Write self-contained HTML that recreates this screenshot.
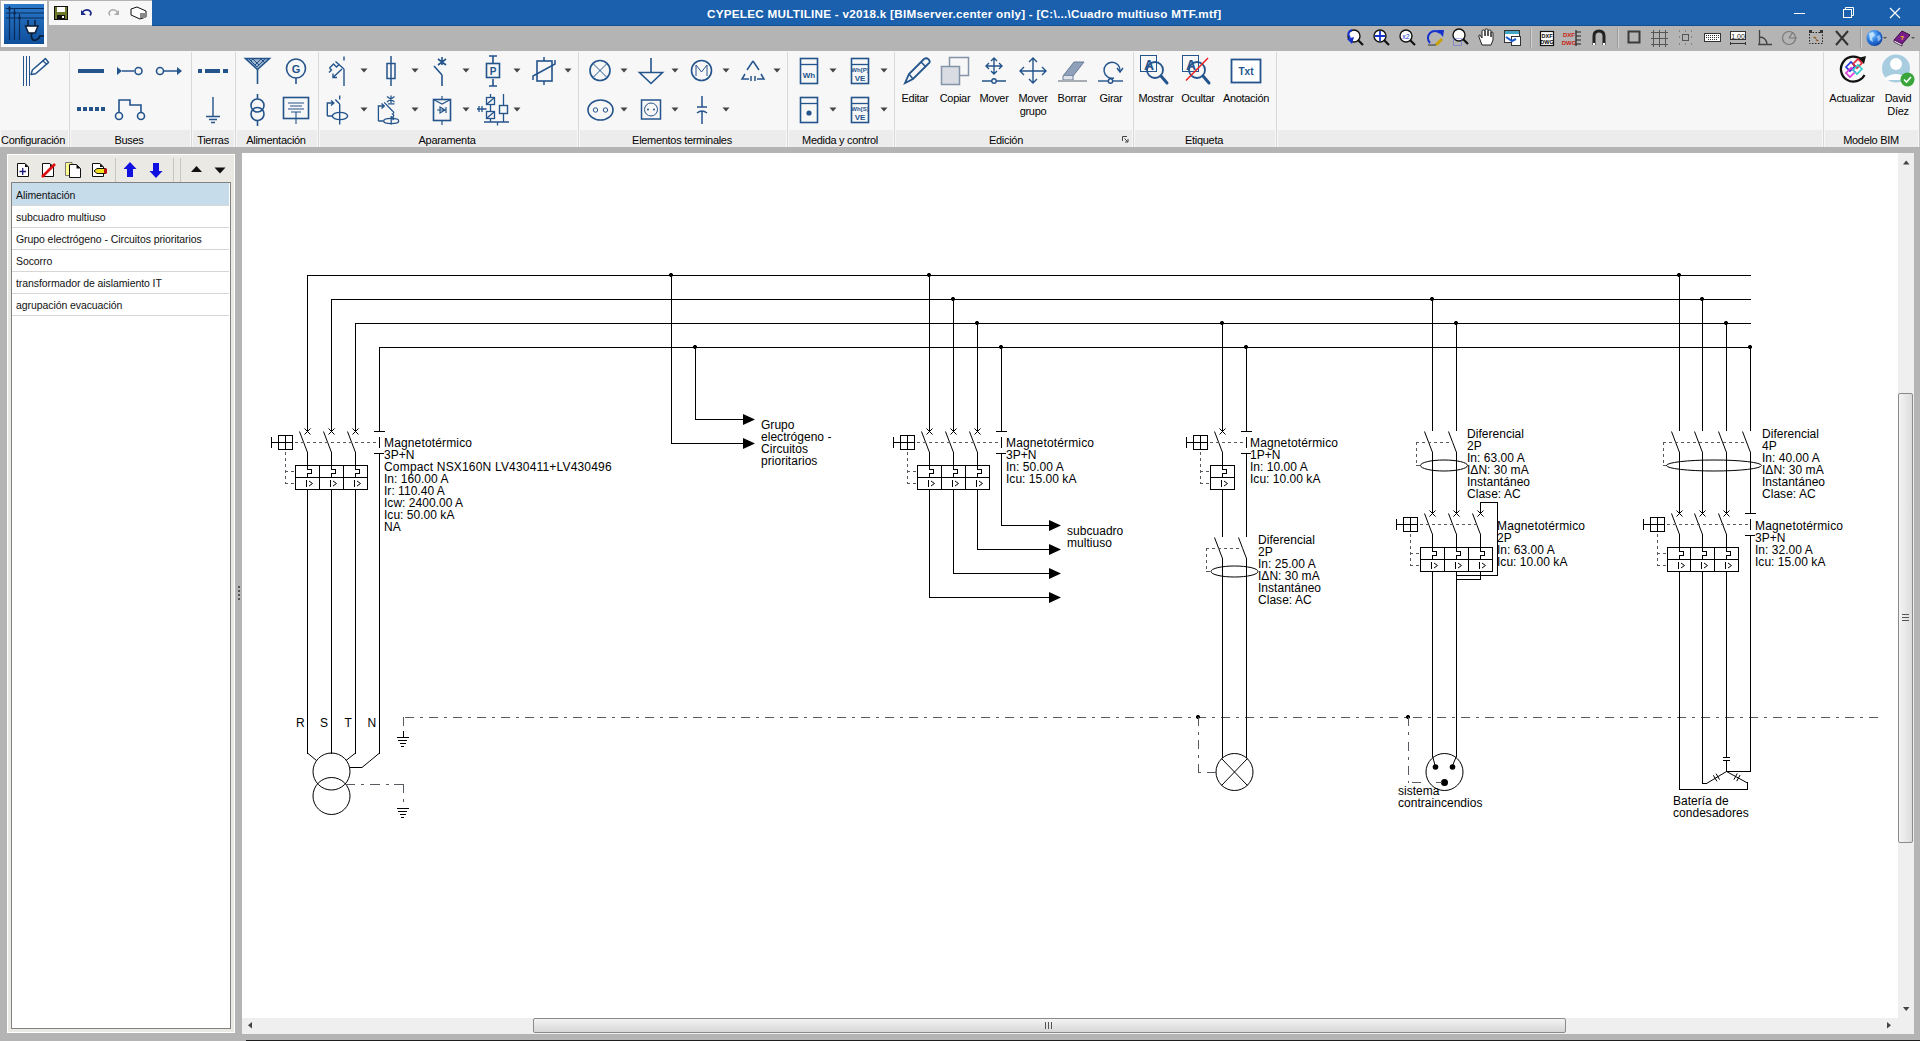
<!DOCTYPE html>
<html><head><meta charset="utf-8">
<style>
*{margin:0;padding:0;box-sizing:border-box}
html,body{width:1920px;height:1041px;overflow:hidden;background:#b4b4b4;font-family:"Liberation Sans",sans-serif;position:relative}
.a{position:absolute}
svg{position:absolute;left:0;top:0}
svg text{font-family:"Liberation Sans",sans-serif}
#title{left:152px;top:0;width:1768px;height:26px;background:#1b60ad}
#ttl{left:707px;top:7px;font-size:11.7px;font-weight:bold;color:#fff;white-space:nowrap;letter-spacing:0.26px}
#ribbon{left:0;top:51px;width:1920px;height:96px;background:#f7f7f7}
#left{left:7px;top:154px;width:228px;height:879px;background:#ebe9e4;border-left:1px solid #fff;border-top:1px solid #fff;border-right:1px solid #fff;border-bottom:1px solid #fff}
#list{left:11px;top:182px;width:220px;height:847px;background:#fff;border:1px solid #828282}
#canvas{left:242px;top:153px;width:1656px;height:865px;background:#fff}
#vscroll{left:1898px;top:153px;width:16px;height:881px;background:#efefef}
#hscroll{left:242px;top:1018px;width:1656px;height:16px;background:#efefef}
#bottomline{left:246px;top:1040px;width:1674px;height:1px;background:#1e1e1e}
#vthumb{left:1898px;top:393px;width:15px;height:450px;border:1px solid #8a8a8a;border-radius:2px;background:linear-gradient(90deg,#f4f4f4,#dcdcdc)}
#hthumb{left:533px;top:1018px;width:1033px;height:15px;border:1px solid #8a8a8a;border-radius:2px;background:linear-gradient(180deg,#f4f4f4,#d6d6d6)}
</style></head>
<body>
<div class="a" id="title"></div>
<div class="a" id="ttl">CYPELEC MULTILINE - v2018.k [BIMserver.center only] - [C:\...\Cuadro multiuso MTF.mtf]</div>
<div class="a" id="ribbon"></div>
<div class="a" id="left"></div>
<div class="a" id="list"></div>
<div class="a" id="canvas"></div>
<div class="a" id="vscroll"></div>
<div class="a" id="hscroll"></div>
<div class="a" id="vthumb"></div>
<div class="a" id="hthumb"></div>
<div class="a" id="bottomline"></div>
<svg width="1920" height="1041" viewBox="0 0 1920 1041">
<rect x="1" y="1" width="46" height="46" fill="#fbfbfb"/>
<defs><linearGradient id="ag" x1="0" y1="0" x2="0" y2="1"><stop offset="0" stop-color="#2a78c8"/><stop offset="1" stop-color="#0f4f9c"/></linearGradient></defs>
<rect x="4" y="4" width="40" height="40" fill="url(#ag)"/>
<path d="M6,8.5H44M6,13H44M6,18H44M9.5,6V40M14.5,9V40M19.5,14V40" stroke="#0a2c5a" stroke-width="1.2"/><circle cx="9.5" cy="8.5" r="1.5" fill="#0a2c5a"/><circle cx="14.5" cy="13" r="1.5" fill="#0a2c5a"/><circle cx="19.5" cy="18" r="1.5" fill="#0a2c5a"/>
<path d="M28,20V26M35,20V26M25.5,26H38L35,33H28.5Z" fill="#fff" stroke="#0a1a30" stroke-width="1.4"/><path d="M31.5,33V37Q32,41 36,40Q39,39 40,36H44" fill="none" stroke="#0a1a30" stroke-width="1.6"/>
<rect x="49" y="1" width="103" height="24" fill="#f7f7f7"/>
<rect x="54.5" y="6.5" width="13" height="13" fill="#6d7a2e" stroke="#111" stroke-width="1"/><rect x="57" y="7" width="8" height="5" fill="#fff"/><rect x="57" y="15" width="8" height="4" fill="#111"/><rect x="62" y="16" width="2" height="2" fill="#fff"/>
<path d="M82,12.5Q86,8 90,11Q92,13 90,15.5" fill="none" stroke="#1a2a8a" stroke-width="1.6"/><path d="M81,10V15H86Z" fill="#1a2a8a"/>
<path d="M118,12.5Q114,8 110,11Q108,13 110,15.5" fill="none" stroke="#aaa" stroke-width="1.4"/><path d="M119,10V15H114Z" fill="#aaa"/>
<path d="M131,9L137,7L146,11L146,17L140,19L131,15Z" fill="#fff" stroke="#111" stroke-width="1"/><rect x="140" y="13" width="6" height="5" fill="#888"/>
<path d="M1794,13.5H1805" stroke="#fff" stroke-width="1"/>
<rect x="1843.5" y="9.5" width="8" height="8" fill="none" stroke="#fff"/><path d="M1845.5,9.5V7.5H1853.5V15.5H1851.5" fill="none" stroke="#fff"/>
<path d="M1890,8L1900,18M1900,8L1890,18" stroke="#fff" stroke-width="1.2"/>
<rect x="1530" y="28" width="1" height="20" fill="#9a9a9a"/><rect x="1531" y="28" width="1" height="20" fill="#d0d0d0"/>
<rect x="1617" y="28" width="1" height="20" fill="#9a9a9a"/><rect x="1618" y="28" width="1" height="20" fill="#d0d0d0"/>
<rect x="1860" y="28" width="1" height="20" fill="#9a9a9a"/><rect x="1861" y="28" width="1" height="20" fill="#d0d0d0"/>
<circle cx="1354" cy="36" r="6" fill="#fff" stroke="#111" stroke-width="1.4"/><path d="M1358,40L1363,45" stroke="#111" stroke-width="2.2"/><path d="M1350,38Q1346,32 1352,30" fill="none" stroke="#1533cc" stroke-width="2"/><path d="M1347,39L1352,44L1354,37Z" fill="#1533cc"/>
<circle cx="1380" cy="36" r="6" fill="#fff" stroke="#111" stroke-width="1.4"/><path d="M1384,40L1389,45" stroke="#111" stroke-width="2.2"/><path d="M1380,31V41M1375,36H1385" stroke="#1533cc" stroke-width="1.8"/>
<circle cx="1406" cy="36" r="6" fill="#fff" stroke="#111" stroke-width="1.4"/><path d="M1410,40L1415,45" stroke="#111" stroke-width="2.2"/><text x="1406" y="39" font-size="7" text-anchor="middle" fill="#1533cc">x2</text>
<path d="M1430,43A7,7 0 1 1 1440,33" fill="none" stroke="#1533cc" stroke-width="2"/><path d="M1437,30L1444,30L1443,37Z" fill="#1533cc"/><path d="M1436,45L1442,39" stroke="#c8a000" stroke-width="3"/><path d="M1428,45H1436" stroke="#333" stroke-width="1"/>
<circle cx="1459" cy="35" r="6" fill="#fff" stroke="#111" stroke-width="1.4"/><path d="M1463,39L1468,44" stroke="#111" stroke-width="2.2"/><rect x="1453.5" y="38.5" width="8" height="7" fill="none" stroke="#5566dd" stroke-dasharray="1,1"/>
<path d="M1482,45L1479,37Q1478,35 1480,35L1482,38V31Q1482,30 1483.5,30Q1485,30 1485,31V36V30Q1485,29 1486.5,29Q1488,29 1488,30V36V31Q1488,30 1489.5,30Q1491,30 1491,31V37V33Q1491,32 1492,32Q1493,32 1493,33V40L1491,45Z" fill="#fff" stroke="#222" stroke-width="1"/>
<rect x="1504.5" y="30.5" width="15" height="12" fill="#fff" stroke="#333"/><rect x="1505" y="31" width="14" height="3" fill="#43a6c6"/><rect x="1511.5" y="36.5" width="9" height="9" fill="#fff" stroke="#333"/><path d="M1506,37L1512,41L1516,39" fill="none" stroke="#1a5ad0" stroke-width="2"/>
<rect x="1540.5" y="31.5" width="13" height="14" fill="#fff" stroke="#111" stroke-width="1.2"/><text x="1547" y="38" font-size="5.5" font-weight="bold" text-anchor="middle">DXF</text><text x="1547" y="44" font-size="5.5" font-weight="bold" text-anchor="middle">DWG</text>
<text x="1569" y="37" font-size="6" font-weight="bold" text-anchor="middle" fill="#c21">DXF</text><text x="1569" y="45" font-size="6" font-weight="bold" text-anchor="middle" fill="#c21">DWG</text><path d="M1576,30V46M1576,32H1581M1576,36H1581M1576,40H1581M1576,44H1581" stroke="#222" stroke-width="1.2"/>
<path d="M1594,45V36Q1594,31 1599,31Q1604,31 1604,36V45" fill="none" stroke="#222" stroke-width="3"/><rect x="1593" y="43" width="2" height="2" fill="#fff"/><rect x="1603" y="43" width="2" height="2" fill="#fff"/>
<rect x="1628.5" y="31.5" width="11" height="11" fill="none" stroke="#3a3a3a" stroke-width="2"/>
<path d="M1653.5,30V47M1659.5,30V47M1665.5,30V47M1651,32.5H1668M1651,38.5H1668M1651,44.5H1668" stroke="#555" stroke-width="1"/>
<rect x="1682.5" y="34.5" width="6" height="6" fill="none" stroke="#555"/><path d="M1679,31H1680M1685,31H1686M1691,31H1692M1679,44H1680M1685,44H1686M1691,44H1692M1679,37H1680M1691,37H1692" stroke="#555"/>
<rect x="1704.5" y="33.5" width="16" height="8" fill="#fff" stroke="#333" stroke-width="1"/><path d="M1706,35.5H1719M1706,37.5H1719M1708,39.5H1717" stroke="#333" stroke-width="1" stroke-dasharray="1,1"/>
<rect x="1730.5" y="31.5" width="15" height="8" fill="#fff" stroke="#333"/><text x="1738" y="38.5" font-size="7" text-anchor="middle" fill="#222">1.00</text><path d="M1730,43.5H1746M1730.5,42V45M1745.5,42V45" stroke="#333"/>
<path d="M1758,44.5H1772M1759.5,30V44.5M1759.5,37Q1766,37 1767,44" fill="none" stroke="#444" stroke-width="1.3"/>
<circle cx="1789" cy="38" r="6.5" fill="none" stroke="#777" stroke-width="1.2"/><path d="M1789,38H1797M1789,38L1793,32" stroke="#777" stroke-width="1.2"/>
<rect x="1809.5" y="32.5" width="13" height="11" fill="none" stroke="#222" stroke-dasharray="1.5,1.5"/><rect x="1809" y="30" width="3" height="3" fill="#333"/><rect x="1820" y="30" width="3" height="3" fill="#333"/><path d="M1813,37H1816V41H1819" stroke="#c96" stroke-width="1"/>
<path d="M1836,31L1848,45M1848,31L1836,45" stroke="#333" stroke-width="2"/>
<defs><radialGradient id="gl" cx="0.35" cy="0.3" r="0.8"><stop offset="0" stop-color="#8fd0ff"/><stop offset="0.5" stop-color="#2a7be0"/><stop offset="1" stop-color="#0b3a9a"/></radialGradient></defs><circle cx="1874.5" cy="38" r="8" fill="url(#gl)"/><path d="M1869,33L1873,32L1875,35L1872,38L1873,42L1870,40Z" fill="#cfeaff" opacity="0.8"/><path d="M1877,36L1880,35L1881,39L1878,42Z" fill="#cfeaff" opacity="0.6"/><path d="M1883,37H1887L1885,39Z" fill="#555"/>
<path d="M1894,40L1902,31L1910,35L1902,44Z" fill="#7a1f8a" stroke="#3a0a44" stroke-width="1"/><path d="M1894,40L1902,44V46L1894,42Z" fill="#fff" stroke="#3a0a44" stroke-width=".8"/><text x="1902" y="40" font-size="6" font-weight="bold" text-anchor="middle" fill="#ffdd00">?</text><path d="M1911,37H1915L1913,39Z" fill="#555"/>
<rect x="1" y="130" width="67" height="17" fill="#ececec"/>
<rect x="71" y="130" width="119" height="17" fill="#ececec"/>
<rect x="193" y="130" width="41" height="17" fill="#ececec"/>
<rect x="237" y="130" width="80" height="17" fill="#ececec"/>
<rect x="320" y="130" width="257" height="17" fill="#ececec"/>
<rect x="580" y="130" width="206" height="17" fill="#ececec"/>
<rect x="789" y="130" width="104" height="17" fill="#ececec"/>
<rect x="896" y="130" width="236" height="17" fill="#ececec"/>
<rect x="1135" y="130" width="140" height="17" fill="#ececec"/>
<rect x="1278" y="130" width="544" height="17" fill="#ececec"/>
<rect x="1825" y="130" width="93" height="17" fill="#ececec"/>
<rect x="69" y="52" width="1" height="95" fill="#d8d8d8"/>
<rect x="191" y="52" width="1" height="95" fill="#d8d8d8"/>
<rect x="235" y="52" width="1" height="95" fill="#d8d8d8"/>
<rect x="318" y="52" width="1" height="95" fill="#d8d8d8"/>
<rect x="578" y="52" width="1" height="95" fill="#d8d8d8"/>
<rect x="787" y="52" width="1" height="95" fill="#d8d8d8"/>
<rect x="894" y="52" width="1" height="95" fill="#d8d8d8"/>
<rect x="1133" y="52" width="1" height="95" fill="#d8d8d8"/>
<rect x="1276" y="52" width="1" height="95" fill="#d8d8d8"/>
<rect x="1823" y="52" width="1" height="95" fill="#d8d8d8"/>
<rect x="1919" y="51" width="1" height="96" fill="#c8c8c8"/>
<text x="33" y="143.5" font-size="11" letter-spacing="-0.3" text-anchor="middle" fill="#050505">Configuración</text>
<text x="129" y="143.5" font-size="11" letter-spacing="-0.3" text-anchor="middle" fill="#050505">Buses</text>
<text x="213" y="143.5" font-size="11" letter-spacing="-0.3" text-anchor="middle" fill="#050505">Tierras</text>
<text x="276" y="143.5" font-size="11" letter-spacing="-0.3" text-anchor="middle" fill="#050505">Alimentación</text>
<text x="447" y="143.5" font-size="11" letter-spacing="-0.3" text-anchor="middle" fill="#050505">Aparamenta</text>
<text x="682" y="143.5" font-size="11" letter-spacing="-0.3" text-anchor="middle" fill="#050505">Elementos terminales</text>
<text x="840" y="143.5" font-size="11" letter-spacing="-0.3" text-anchor="middle" fill="#050505">Medida y control</text>
<text x="1006" y="143.5" font-size="11" letter-spacing="-0.3" text-anchor="middle" fill="#050505">Edición</text>
<text x="1204" y="143.5" font-size="11" letter-spacing="-0.3" text-anchor="middle" fill="#050505">Etiqueta</text>
<text x="1871" y="143.5" font-size="11" letter-spacing="-0.3" text-anchor="middle" fill="#050505">Modelo BIM</text>
<text x="915" y="101.5" font-size="11" letter-spacing="-0.3" text-anchor="middle" fill="#050505">Editar</text>
<text x="955" y="101.5" font-size="11" letter-spacing="-0.3" text-anchor="middle" fill="#050505">Copiar</text>
<text x="994" y="101.5" font-size="11" letter-spacing="-0.3" text-anchor="middle" fill="#050505">Mover</text>
<text x="1033" y="101.5" font-size="11" letter-spacing="-0.3" text-anchor="middle" fill="#050505">Mover</text>
<text x="1033" y="114.5" font-size="11" letter-spacing="-0.3" text-anchor="middle" fill="#050505">grupo</text>
<text x="1072" y="101.5" font-size="11" letter-spacing="-0.3" text-anchor="middle" fill="#050505">Borrar</text>
<text x="1111" y="101.5" font-size="11" letter-spacing="-0.3" text-anchor="middle" fill="#050505">Girar</text>
<text x="1156" y="101.5" font-size="11" letter-spacing="-0.3" text-anchor="middle" fill="#050505">Mostrar</text>
<text x="1198" y="101.5" font-size="11" letter-spacing="-0.3" text-anchor="middle" fill="#050505">Ocultar</text>
<text x="1246" y="101.5" font-size="11" letter-spacing="-0.3" text-anchor="middle" fill="#050505">Anotación</text>
<text x="1852" y="101.5" font-size="11" letter-spacing="-0.3" text-anchor="middle" fill="#050505">Actualizar</text>
<text x="1898" y="101.5" font-size="11" letter-spacing="-0.3" text-anchor="middle" fill="#050505">David</text>
<text x="1898" y="114.5" font-size="11" letter-spacing="-0.3" text-anchor="middle" fill="#050505">Díez</text>
<path d="M23.5,56V86M26.5,56V86M29.5,56V86" stroke="#24548c" stroke-width="1"/>
<path d="M31,74.5L35.6,73.8L48.6,62.4L45.4,58.6L32.4,70Z" fill="#fff" stroke="#24548c" stroke-width="1.5" stroke-linejoin="round"/><path d="M43,61L47,64.5" stroke="#24548c" stroke-width="1.2"/>
<rect x="78" y="69" width="26" height="4" fill="#24548c"/>
<path d="M117,67V75L122,71Z" fill="#24548c"/><path d="M122,71H134" stroke="#24548c" stroke-width="1.5"/><circle cx="138.5" cy="71" r="3.5" fill="none" stroke="#24548c" stroke-width="1.6"/>
<circle cx="160" cy="71" r="3.5" fill="none" stroke="#24548c" stroke-width="1.6"/><path d="M163.5,71H177" stroke="#24548c" stroke-width="1.5"/><path d="M177,67V75L182,71Z" fill="#24548c"/>
<rect x="77" y="107" width="4" height="4" fill="#24548c"/>
<rect x="83" y="107" width="4" height="4" fill="#24548c"/>
<rect x="89" y="107" width="4" height="4" fill="#24548c"/>
<rect x="95" y="107" width="4" height="4" fill="#24548c"/>
<rect x="101" y="107" width="4" height="4" fill="#24548c"/>
<path d="M119,112.5V100H130V105H141V112.5" fill="none" stroke="#24548c" stroke-width="1.6"/><circle cx="119" cy="116" r="3.5" fill="none" stroke="#24548c" stroke-width="1.6"/><circle cx="141" cy="116" r="3.5" fill="none" stroke="#24548c" stroke-width="1.6"/>
<rect x="198" y="69" width="4" height="4" fill="#24548c"/><rect x="205" y="69" width="15" height="4" fill="#24548c"/><rect x="223" y="69" width="5" height="4" fill="#24548c"/>
<path d="M213,97V116M206,116.5H220M209,119.5H217M211,122.5H215" stroke="#24548c" stroke-width="1.4"/>
<path d="M245.5,58.5H269.5L257.5,69.5Z" fill="#9fb3cc" stroke="#24548c" stroke-width="1.6"/><path d="M249,59L257,67M253,59L259,65M261,59L265,63M265,59L257,67M261,59L255,65M253,59L251,61" stroke="#24548c" stroke-width="1"/><path d="M257.5,69V84" stroke="#24548c" stroke-width="1.6"/>
<circle cx="296" cy="68.5" r="9.5" fill="none" stroke="#24548c" stroke-width="1.6"/><text x="296" y="73" font-size="11" font-weight="bold" text-anchor="middle" fill="#24548c">G</text><path d="M296,78V84" stroke="#24548c" stroke-width="1.6"/>
<path d="M257.5,94V99M257.5,120V126" stroke="#24548c" stroke-width="1.6"/><circle cx="257.5" cy="105.5" r="6.5" fill="none" stroke="#24548c" stroke-width="1.6"/><circle cx="257.5" cy="114" r="6.5" fill="none" stroke="#24548c" stroke-width="1.6"/>
<rect x="283.5" y="97.5" width="25" height="21" fill="none" stroke="#24548c" stroke-width="1.6"/><path d="M288,103H304M290,106H302M288,109H304M291,112H301M296,112V124" stroke="#24548c" stroke-width="1.1"/>
<path d="M360.5,68.5H367.5L364,72.5Z" fill="#444"/>
<path d="M411.5,68.5H418.5L415,72.5Z" fill="#444"/>
<path d="M462.5,68.5H469.5L466,72.5Z" fill="#444"/>
<path d="M513.5,68.5H520.5L517,72.5Z" fill="#444"/>
<path d="M564.5,68.5H571.5L568,72.5Z" fill="#444"/>
<path d="M620.5,68.5H627.5L624,72.5Z" fill="#444"/>
<path d="M671.5,68.5H678.5L675,72.5Z" fill="#444"/>
<path d="M722.5,68.5H729.5L726,72.5Z" fill="#444"/>
<path d="M773.5,68.5H780.5L777,72.5Z" fill="#444"/>
<path d="M829.5,68.5H836.5L833,72.5Z" fill="#444"/>
<path d="M880.5,68.5H887.5L884,72.5Z" fill="#444"/>
<path d="M360.5,107.5H367.5L364,111.5Z" fill="#444"/>
<path d="M411.5,107.5H418.5L415,111.5Z" fill="#444"/>
<path d="M462.5,107.5H469.5L466,111.5Z" fill="#444"/>
<path d="M513.5,107.5H520.5L517,111.5Z" fill="#444"/>
<path d="M620.5,107.5H627.5L624,111.5Z" fill="#444"/>
<path d="M671.5,107.5H678.5L675,111.5Z" fill="#444"/>
<path d="M722.5,107.5H729.5L726,111.5Z" fill="#444"/>
<path d="M829.5,107.5H836.5L833,111.5Z" fill="#444"/>
<path d="M880.5,107.5H887.5L884,111.5Z" fill="#444"/>
<path d="M344,56.5V60.5M344,69V86M344,69L335.5,61.5M329.5,68L333.5,64L336.5,67L339.5,64M329.5,68L331.5,70L329,72.5M342,69L333,77.5M333,73.5V77.5H337" fill="none" stroke="#24548c" stroke-width="1.4"/>
<path d="M391,56V86" stroke="#24548c" stroke-width="1.5"/><rect x="387" y="63.5" width="8" height="15" fill="none" stroke="#24548c" stroke-width="1.5"/>
<path d="M442,57V65M442,75V86M442,75L434,66M438,59L446,65M446,59L438,65" fill="none" stroke="#24548c" stroke-width="1.6"/>
<path d="M339.7,95.5V99.5M339.7,104V124.5M339.7,104L335.3,99.5M327.3,116V103H333.5M331,100.5L333.8,103L331,105.5M327.3,116H332" fill="none" stroke="#24548c" stroke-width="1.4"/><ellipse cx="340" cy="116" rx="7.6" ry="3.6" fill="none" stroke="#24548c" stroke-width="1.4"/>
<path d="M387,96.5L394.5,102M394.5,96.5L387,102M388,103.8H394.5M391,95.5V103M384.2,102.4L392.5,111M392.5,111Q395,112.5 392.5,114Q395,115.5 392.5,117Q395,118.5 392.5,120M378.4,121V106H384M381.5,103.5L384.3,106L381.5,108.5M378.4,121H383.5M391.2,116V124.5" fill="none" stroke="#24548c" stroke-width="1.3"/><ellipse cx="391.2" cy="121" rx="7.5" ry="2.6" fill="none" stroke="#24548c" stroke-width="1.3"/>
<rect x="433.5" y="99.5" width="17" height="21" fill="none" stroke="#24548c" stroke-width="1.6"/><path d="M433.5,99.5L442,104L450.5,99.5M437,110H446M440,107L445,110L440,113ZM446,107V113M442,96V99M442,121V125" fill="none" stroke="#24548c" stroke-width="1.2"/>
<path d="M493,56V63M489,56H497M493,79V86M489,86H497" fill="none" stroke="#24548c" stroke-width="1.6"/><rect x="486.5" y="63.5" width="13" height="14" fill="none" stroke="#24548c" stroke-width="1.6"/><text x="493" y="75" font-size="10" font-weight="bold" text-anchor="middle" fill="#24548c">P</text>
<rect x="537" y="61" width="15" height="20" fill="none" stroke="#24548c" stroke-width="1.6"/><path d="M544,57V61M544,81V85M533,80V76L555,64V60" fill="none" stroke="#24548c" stroke-width="1.5"/>
<path d="M477,109H486.5M479,106V112M482,106V112M490.5,94V97.5M490.5,104.5V111.5M490.5,118.5V122M503.5,94V105.5M503.5,113.5V122M484,122H509M497.5,122V125.5M487,104L494,98M487,118L494,112" fill="none" stroke="#24548c" stroke-width="1.3"/><rect x="486.5" y="97.5" width="8" height="7" fill="none" stroke="#24548c" stroke-width="1.3"/><rect x="486.5" y="111.5" width="8" height="7" fill="none" stroke="#24548c" stroke-width="1.3"/><rect x="499.5" y="105.5" width="8" height="8" fill="none" stroke="#24548c" stroke-width="1.4"/>
<circle cx="600" cy="70.5" r="10" fill="none" stroke="#24548c" stroke-width="1.6"/><path d="M593,63.5L607,77.5M607,63.5L593,77.5" stroke="#24548c" stroke-width="1"/>
<path d="M651,58V72M639.5,72.5H662.5L651,83.5Z" fill="none" stroke="#24548c" stroke-width="1.6"/>
<circle cx="701.5" cy="70.5" r="10" fill="none" stroke="#24548c" stroke-width="1.6"/><path d="M696,76V65L701.5,72L707,65V76" fill="none" stroke="#24548c" stroke-width="1"/>
<path d="M753,61L747,70M753,61L759,70M745,74L742,79H749M761,74L764,79H757M751,76V81M755,76V81" fill="none" stroke="#24548c" stroke-width="1.5"/>
<ellipse cx="600.5" cy="110" rx="12.5" ry="10" fill="none" stroke="#24548c" stroke-width="1.6"/><circle cx="595.5" cy="110" r="2.2" fill="none" stroke="#24548c" stroke-width="1"/><circle cx="605.5" cy="110" r="2.2" fill="none" stroke="#24548c" stroke-width="1"/>
<rect x="641.5" y="100" width="19" height="19" fill="none" stroke="#24548c" stroke-width="1.5"/><circle cx="651" cy="109.5" r="6.5" fill="none" stroke="#24548c" stroke-width="1"/><circle cx="648" cy="109.5" r="1" fill="#24548c"/><circle cx="654" cy="109.5" r="1" fill="#24548c"/>
<path d="M702,96V107M697,107H707M702,111V124M697,113Q702,109 707,113" fill="none" stroke="#24548c" stroke-width="1.5"/>
<rect x="800.5" y="58.5" width="17" height="25" fill="none" stroke="#24548c" stroke-width="1.6"/><path d="M801,64.5H818" stroke="#24548c" stroke-width="1.3"/>
<rect x="851.5" y="58.5" width="17" height="25" fill="none" stroke="#24548c" stroke-width="1.6"/><path d="M852,64.5H869" stroke="#24548c" stroke-width="1.3"/>
<rect x="800.5" y="97.5" width="17" height="25" fill="none" stroke="#24548c" stroke-width="1.6"/><path d="M801,103.5H818" stroke="#24548c" stroke-width="1.3"/>
<rect x="851.5" y="97.5" width="17" height="25" fill="none" stroke="#24548c" stroke-width="1.6"/><path d="M852,103.5H869" stroke="#24548c" stroke-width="1.3"/>
<text x="809" y="78" font-size="8" font-weight="bold" text-anchor="middle" fill="#24548c">Wh</text>
<text x="860" y="72" font-size="6" font-weight="bold" text-anchor="middle" fill="#24548c">Wh[P]</text><text x="860" y="81" font-size="8" font-weight="bold" text-anchor="middle" fill="#24548c">VE</text>
<circle cx="809" cy="113" r="2.6" fill="#24548c"/>
<text x="860" y="111" font-size="6" font-weight="bold" text-anchor="middle" fill="#24548c">Wh[S]</text><text x="860" y="120" font-size="8" font-weight="bold" text-anchor="middle" fill="#24548c">VE</text>
<path d="M905,83L909,74L924,59Q927,57 929,60Q931,62 928,64L913,79Z" fill="none" stroke="#24548c" stroke-width="1.8"/><path d="M909,74L913,79M921,62L926,67" stroke="#24548c" stroke-width="1.5"/>
<rect x="949.5" y="57.5" width="19" height="18" fill="#f7f7f7" stroke="#8494a8" stroke-width="1.5"/><rect x="941.5" y="66.5" width="18" height="18" fill="#d9dce3" stroke="#8494a8" stroke-width="1.5"/>
<path d="M994,58V74M986,66H1002M991,61L994,58L997,61M991,71L994,74L997,71M989,63L986,66L989,69M999,63L1002,66L999,69M982,81H1006" fill="none" stroke="#24548c" stroke-width="1.4"/><circle cx="994" cy="81" r="2.2" fill="#f7f7f7" stroke="#24548c" stroke-width="1.4"/>
<path d="M1033,58V83M1020,71H1046M1029,62L1033,58L1037,62M1029,79L1033,83L1037,79M1024,67L1020,71L1024,75M1042,67L1046,71L1042,75" fill="none" stroke="#24548c" stroke-width="1.4"/>
<path d="M1063,76L1074,62H1084L1073,76Z" fill="#8fa0bb" stroke="#6a7b95" stroke-width="1"/><path d="M1063,76V80H1073V76" fill="#dfe3ea" stroke="#6a7b95" stroke-width="1"/><path d="M1058,81H1087" stroke="#a8acb3" stroke-width="2"/>
<path d="M1120,71A8,8 0 1 0 1114,78" fill="none" stroke="#24548c" stroke-width="1.4"/><path d="M1117,68L1120,72L1123,68" fill="none" stroke="#24548c" stroke-width="1.4"/><path d="M1098,81H1123" stroke="#24548c" stroke-width="1.4"/><circle cx="1110.5" cy="81" r="2.2" fill="#f7f7f7" stroke="#24548c" stroke-width="1.4"/>
<path d="M1122.5,141V136.5H1127M1124.5,138.5L1128,142M1128,139V142H1125" fill="none" stroke="#444" stroke-width="1"/>
<rect x="1140.5" y="55.5" width="16" height="16" fill="none" stroke="#24548c" stroke-width="1"/><text x="1149" y="70" font-size="14" font-weight="bold" text-anchor="middle" fill="#24548c">A</text><circle cx="1155" cy="70" r="8" fill="none" stroke="#24548c" stroke-width="1.8"/><path d="M1161,76L1167,83" stroke="#24548c" stroke-width="3" stroke-linecap="round"/>
<rect x="1182.5" y="55.5" width="16" height="16" fill="none" stroke="#24548c" stroke-width="1"/><text x="1191" y="70" font-size="14" font-weight="bold" text-anchor="middle" fill="#24548c">A</text><circle cx="1197" cy="70" r="8" fill="none" stroke="#24548c" stroke-width="1.8"/><path d="M1203,76L1209,83" stroke="#24548c" stroke-width="3" stroke-linecap="round"/>
<path d="M1186,80.5L1208,58" stroke="#e22" stroke-width="1.5"/>
<rect x="1231.5" y="59.5" width="29" height="23" fill="#fff" stroke="#24548c" stroke-width="1.8"/><text x="1246" y="75" font-size="10" font-weight="bold" text-anchor="middle" fill="#24548c">Txt</text>
<path d="M1862,60A12.5,12.5 0 1 0 1864.5,75" fill="none" stroke="#111" stroke-width="2.3"/><path d="M1858,58L1866,56L1864,64Z" fill="#111"/>
<path d="M1846,67L1851,62L1855,66L1850,71Z" fill="none" stroke="#2233dd" stroke-width="1.6"/><path d="M1853,64L1858,59L1862,63L1857,68Z" fill="none" stroke="#dd2233" stroke-width="1.6"/><path d="M1846,73L1851,68L1855,72L1850,77Z" fill="none" stroke="#dd33dd" stroke-width="1.6"/><path d="M1853,70L1858,65L1862,69L1857,74Z" fill="none" stroke="#33cccc" stroke-width="1.6"/>
<circle cx="1896" cy="68.5" r="14" fill="#a9cde0"/><circle cx="1896" cy="64" r="6" fill="#fff"/><path d="M1885,78Q1896,70 1907,78L1907,80L1885,80Z" fill="#fff"/><circle cx="1907.5" cy="79.5" r="7" fill="#3aa53a"/><path d="M1904,79.5L1906.5,82L1911,77" fill="none" stroke="#fff" stroke-width="1.6"/>
<path d="M17.5,163.5H25L28.5,167V176.5H17.5Z" fill="#fff" stroke="#111"/><path d="M25,163.5V167H28.5Z" fill="#111"/><path d="M19.5,171.5H26M22.7,168V175" stroke="#1a1a7a" stroke-width="1.3"/>
<path d="M42.5,163.5H50L53.5,167V176.5H42.5Z" fill="#fff" stroke="#111"/><path d="M50,163.5V167H53.5Z" fill="#111"/><path d="M42,177L55,164" stroke="#e01010" stroke-width="2.6"/>
<path d="M65.5,162.5H72V175.5H65.5Z" fill="#ffff90" stroke="#777"/><path d="M69.5,164.5H76.5L80.5,168.5V177.5H69.5Z" fill="#fff" stroke="#111"/><path d="M76.5,164.5V168.5H80.5Z" fill="#111"/>
<path d="M92.5,163.5H100L103.5,167V176.5H92.5Z" fill="#fff" stroke="#111"/><path d="M100,163.5V167H103.5Z" fill="#111"/><path d="M94,171L97,168.5H105.5V173.5H97Z" fill="#f0e020" stroke="#111" stroke-width="1"/><rect x="104" y="168.5" width="3" height="5" fill="#c01010"/>
<rect x="115" y="158" width="1" height="24" fill="#c8c6c0"/>
<path d="M130,162L136.5,169H133V177H127V169H123.5Z" fill="#1010e0"/>
<path d="M156,178L162.5,171H159V163H153V171H149.5Z" fill="#1010e0"/>
<rect x="173" y="158" width="1" height="24" fill="#c8c6c0"/><rect x="180" y="158" width="1" height="24" fill="#c8c6c0"/>
<path d="M191,172H202L196.5,166Z" fill="#111"/><path d="M214.5,167.5H225.5L220,173.5Z" fill="#111"/>
<rect x="12" y="183" width="217" height="22" fill="#c6dcea"/>
<rect x="12" y="205" width="217" height="1" fill="#d6d6d6"/>
<text x="16" y="198.5" font-size="10.5" letter-spacing="-0.08" fill="#111">Alimentación</text>
<rect x="12" y="227" width="217" height="1" fill="#d6d6d6"/>
<text x="16" y="220.5" font-size="10.5" letter-spacing="-0.08" fill="#111">subcuadro multiuso</text>
<rect x="12" y="249" width="217" height="1" fill="#d6d6d6"/>
<text x="16" y="242.5" font-size="10.5" letter-spacing="-0.08" fill="#111">Grupo electrógeno - Circuitos prioritarios</text>
<rect x="12" y="271" width="217" height="1" fill="#d6d6d6"/>
<text x="16" y="264.5" font-size="10.5" letter-spacing="-0.08" fill="#111">Socorro</text>
<rect x="12" y="293" width="217" height="1" fill="#d6d6d6"/>
<text x="16" y="286.5" font-size="10.5" letter-spacing="-0.08" fill="#111">transformador de aislamiento IT</text>
<rect x="12" y="315" width="217" height="1" fill="#d6d6d6"/>
<text x="16" y="308.5" font-size="10.5" letter-spacing="-0.08" fill="#111">agrupación evacuación</text>
<path d="M1903,164.5H1909.5L1906.2,160.5Z" fill="#444"/>
<path d="M1903,1007H1909.5L1906.2,1011Z" fill="#444"/>
<path d="M252,1022V1028.5L248,1025.2Z" fill="#444"/>
<path d="M1887,1022V1028.5L1891,1025.2Z" fill="#444"/>
<path d="M1902,614.5H1909M1902,617.5H1909M1902,620.5H1909" stroke="#555" stroke-width="1"/>
<path d="M1045.5,1022V1029M1048.5,1022V1029M1051.5,1022V1029" stroke="#555" stroke-width="1"/>
<rect x="238" y="586" width="2" height="2" fill="#555"/><rect x="238" y="590" width="2" height="2" fill="#555"/><rect x="238" y="594" width="2" height="2" fill="#555"/><rect x="238" y="598" width="2" height="2" fill="#555"/><rect x="152" y="25" width="1768" height="1" fill="#12508f"/>
</svg>
<svg width="1920" height="1041" viewBox="0 0 1920 1041" shape-rendering="auto">
<rect x="307" y="275" width="1444" height="1" fill="#000"/>
<rect x="331" y="299" width="1420" height="1" fill="#000"/>
<rect x="355" y="323" width="1396" height="1" fill="#000"/>
<rect x="379" y="347" width="1372" height="1" fill="#000"/>
<path d="M304.5,428.5L310.5,434.5M310.5,428.5L304.5,434.5" stroke="#000" stroke-width="1"/>
<line x1="299.5" y1="431.5" x2="307.5" y2="452.5" stroke="#000" stroke-width="1"/>
<rect x="307" y="452" width="1" height="14" fill="#000"/>
<path d="M328.5,428.5L334.5,434.5M334.5,428.5L328.5,434.5" stroke="#000" stroke-width="1"/>
<line x1="323.5" y1="431.5" x2="331.5" y2="452.5" stroke="#000" stroke-width="1"/>
<rect x="331" y="452" width="1" height="14" fill="#000"/>
<path d="M352.5,428.5L358.5,434.5M358.5,428.5L352.5,434.5" stroke="#000" stroke-width="1"/>
<line x1="347.5" y1="431.5" x2="355.5" y2="452.5" stroke="#000" stroke-width="1"/>
<rect x="355" y="452" width="1" height="14" fill="#000"/>
<rect x="295" y="465" width="73" height="1" fill="#000"/>
<rect x="295" y="489" width="73" height="1" fill="#000"/>
<rect x="295" y="477" width="73" height="1" fill="#000"/>
<rect x="295" y="465" width="1" height="25" fill="#000"/>
<rect x="367" y="465" width="1" height="25" fill="#000"/>
<rect x="319" y="465" width="1" height="25" fill="#000"/>
<rect x="343" y="465" width="1" height="25" fill="#000"/>
<rect x="307" y="465" width="1" height="5" fill="#000"/>
<rect x="307" y="469" width="5" height="1" fill="#000"/>
<rect x="311" y="469" width="1" height="5" fill="#000"/>
<rect x="307" y="473" width="5" height="1" fill="#000"/>
<rect x="307" y="473" width="1" height="5" fill="#000"/>
<rect x="306" y="480" width="1" height="7" fill="#000"/>
<path d="M309,481L312.5,483.5L309,486" fill="none" stroke="#000" stroke-width="1"/>
<rect x="331" y="465" width="1" height="5" fill="#000"/>
<rect x="331" y="469" width="5" height="1" fill="#000"/>
<rect x="335" y="469" width="1" height="5" fill="#000"/>
<rect x="331" y="473" width="5" height="1" fill="#000"/>
<rect x="331" y="473" width="1" height="5" fill="#000"/>
<rect x="330" y="480" width="1" height="7" fill="#000"/>
<path d="M333,481L336.5,483.5L333,486" fill="none" stroke="#000" stroke-width="1"/>
<rect x="355" y="465" width="1" height="5" fill="#000"/>
<rect x="355" y="469" width="5" height="1" fill="#000"/>
<rect x="359" y="469" width="1" height="5" fill="#000"/>
<rect x="355" y="473" width="5" height="1" fill="#000"/>
<rect x="355" y="473" width="1" height="5" fill="#000"/>
<rect x="354" y="480" width="1" height="7" fill="#000"/>
<path d="M357,481L360.5,483.5L357,486" fill="none" stroke="#000" stroke-width="1"/>
<rect x="271" y="437" width="1" height="11" fill="#000"/>
<rect x="271" y="442" width="8" height="1" fill="#000"/>
<rect x="278" y="435" width="15" height="1" fill="#000"/>
<rect x="278" y="449" width="15" height="1" fill="#000"/>
<rect x="278" y="435" width="1" height="15" fill="#000"/>
<rect x="292" y="435" width="1" height="15" fill="#000"/>
<rect x="285" y="435" width="1" height="15" fill="#000"/>
<rect x="278" y="442" width="15" height="1" fill="#000"/>
<rect x="285" y="452" width="1" height="3" fill="#555b60"/>
<rect x="285" y="458" width="1" height="3" fill="#555b60"/>
<rect x="285" y="464" width="1" height="3" fill="#555b60"/>
<rect x="285" y="470" width="1" height="3" fill="#555b60"/>
<rect x="285" y="476" width="1" height="3" fill="#555b60"/>
<rect x="285" y="482" width="1" height="2" fill="#555b60"/>
<rect x="285" y="471" width="3" height="1" fill="#555b60"/>
<rect x="291" y="471" width="3" height="1" fill="#555b60"/>
<rect x="285" y="483" width="3" height="1" fill="#555b60"/>
<rect x="291" y="483" width="3" height="1" fill="#555b60"/>
<rect x="295" y="442" width="3" height="1" fill="#555b60"/>
<rect x="301" y="442" width="3" height="1" fill="#555b60"/>
<rect x="307" y="442" width="3" height="1" fill="#555b60"/>
<rect x="313" y="442" width="3" height="1" fill="#555b60"/>
<rect x="319" y="442" width="3" height="1" fill="#555b60"/>
<rect x="325" y="442" width="3" height="1" fill="#555b60"/>
<rect x="331" y="442" width="3" height="1" fill="#555b60"/>
<rect x="337" y="442" width="3" height="1" fill="#555b60"/>
<rect x="343" y="442" width="3" height="1" fill="#555b60"/>
<rect x="349" y="442" width="3" height="1" fill="#555b60"/>
<rect x="355" y="442" width="3" height="1" fill="#555b60"/>
<rect x="361" y="442" width="3" height="1" fill="#555b60"/>
<rect x="367" y="442" width="3" height="1" fill="#555b60"/>
<rect x="373" y="442" width="3" height="1" fill="#555b60"/>
<rect x="374" y="431" width="11" height="1" fill="#000"/>
<rect x="379" y="437" width="1" height="11" fill="#000"/>
<rect x="374" y="453" width="10" height="1" fill="#000"/>
<rect x="307" y="275" width="1" height="157" fill="#000"/>
<rect x="331" y="299" width="1" height="133" fill="#000"/>
<rect x="355" y="323" width="1" height="109" fill="#000"/>
<rect x="379" y="347" width="1" height="85" fill="#000"/>
<rect x="307" y="489" width="1" height="265" fill="#000"/>
<rect x="331" y="489" width="1" height="265" fill="#000"/>
<rect x="355" y="489" width="1" height="265" fill="#000"/>
<rect x="379" y="453" width="1" height="301" fill="#000"/>
<text x="384" y="447" font-size="12" letter-spacing="0.15">Magnetotérmico</text>
<text x="384" y="459" font-size="12" letter-spacing="0.03">3P+N</text>
<text x="384" y="471" font-size="12" letter-spacing="0.18">Compact NSX160N LV430411+LV430496</text>
<text x="384" y="483" font-size="12" letter-spacing="0.03">In: 160.00 A</text>
<text x="384" y="495" font-size="12" letter-spacing="0.03">Ir: 110.40 A</text>
<text x="384" y="507" font-size="12" letter-spacing="0.03">Icw: 2400.00 A</text>
<text x="384" y="519" font-size="12" letter-spacing="0.03">Icu: 50.00 kA</text>
<text x="384" y="531" font-size="12" letter-spacing="0.03">NA</text>
<text x="296" y="727" font-size="12" letter-spacing="0.03">R</text>
<text x="320" y="727" font-size="12" letter-spacing="0.03">S</text>
<text x="344.5" y="727" font-size="12" letter-spacing="0.03">T</text>
<text x="367.5" y="727" font-size="12" letter-spacing="0.03">N</text>
<circle cx="331.5" cy="771.5" r="18.5" fill="none" stroke="#000"/>
<circle cx="331.5" cy="796" r="18.5" fill="none" stroke="#000"/>
<path d="M307.5,753L316.5,760.5M355.5,753L346,760.5M379.5,753L362,767.5L350,767.5" fill="none" stroke="#000"/>
<rect x="345" y="784" width="10" height="1" fill="#555b60"/>
<rect x="361" y="784" width="3" height="1" fill="#555b60"/>
<rect x="370" y="784" width="10" height="1" fill="#555b60"/>
<rect x="386" y="784" width="3" height="1" fill="#555b60"/>
<rect x="394" y="784" width="10" height="1" fill="#555b60"/>
<rect x="403" y="784" width="1" height="9" fill="#555b60"/>
<rect x="403" y="799" width="1" height="3" fill="#555b60"/>
<rect x="397" y="808" width="12" height="1" fill="#000"/>
<rect x="398" y="811" width="9" height="1" fill="#000"/>
<rect x="400" y="814" width="6" height="1" fill="#000"/>
<rect x="401" y="817" width="3" height="1" fill="#000"/>
<rect x="403" y="717" width="1" height="9" fill="#555b60"/>
<rect x="403" y="731" width="1" height="7" fill="#000"/>
<rect x="397" y="737" width="12" height="1" fill="#000"/>
<rect x="398" y="740" width="9" height="1" fill="#000"/>
<rect x="400" y="743" width="6" height="1" fill="#000"/>
<rect x="401" y="746" width="3" height="1" fill="#000"/>
<rect x="405" y="717" width="9" height="1" fill="#555b60"/>
<rect x="420" y="717" width="3" height="1" fill="#555b60"/>
<rect x="429" y="717" width="9" height="1" fill="#555b60"/>
<rect x="444" y="717" width="3" height="1" fill="#555b60"/>
<rect x="453" y="717" width="9" height="1" fill="#555b60"/>
<rect x="468" y="717" width="3" height="1" fill="#555b60"/>
<rect x="477" y="717" width="9" height="1" fill="#555b60"/>
<rect x="492" y="717" width="3" height="1" fill="#555b60"/>
<rect x="501" y="717" width="9" height="1" fill="#555b60"/>
<rect x="516" y="717" width="3" height="1" fill="#555b60"/>
<rect x="525" y="717" width="9" height="1" fill="#555b60"/>
<rect x="540" y="717" width="3" height="1" fill="#555b60"/>
<rect x="549" y="717" width="9" height="1" fill="#555b60"/>
<rect x="564" y="717" width="3" height="1" fill="#555b60"/>
<rect x="573" y="717" width="9" height="1" fill="#555b60"/>
<rect x="588" y="717" width="3" height="1" fill="#555b60"/>
<rect x="597" y="717" width="9" height="1" fill="#555b60"/>
<rect x="612" y="717" width="3" height="1" fill="#555b60"/>
<rect x="621" y="717" width="9" height="1" fill="#555b60"/>
<rect x="636" y="717" width="3" height="1" fill="#555b60"/>
<rect x="645" y="717" width="9" height="1" fill="#555b60"/>
<rect x="660" y="717" width="3" height="1" fill="#555b60"/>
<rect x="669" y="717" width="9" height="1" fill="#555b60"/>
<rect x="684" y="717" width="3" height="1" fill="#555b60"/>
<rect x="693" y="717" width="9" height="1" fill="#555b60"/>
<rect x="708" y="717" width="3" height="1" fill="#555b60"/>
<rect x="717" y="717" width="9" height="1" fill="#555b60"/>
<rect x="732" y="717" width="3" height="1" fill="#555b60"/>
<rect x="741" y="717" width="9" height="1" fill="#555b60"/>
<rect x="756" y="717" width="3" height="1" fill="#555b60"/>
<rect x="765" y="717" width="9" height="1" fill="#555b60"/>
<rect x="780" y="717" width="3" height="1" fill="#555b60"/>
<rect x="789" y="717" width="9" height="1" fill="#555b60"/>
<rect x="804" y="717" width="3" height="1" fill="#555b60"/>
<rect x="813" y="717" width="9" height="1" fill="#555b60"/>
<rect x="828" y="717" width="3" height="1" fill="#555b60"/>
<rect x="837" y="717" width="9" height="1" fill="#555b60"/>
<rect x="852" y="717" width="3" height="1" fill="#555b60"/>
<rect x="861" y="717" width="9" height="1" fill="#555b60"/>
<rect x="876" y="717" width="3" height="1" fill="#555b60"/>
<rect x="885" y="717" width="9" height="1" fill="#555b60"/>
<rect x="900" y="717" width="3" height="1" fill="#555b60"/>
<rect x="909" y="717" width="9" height="1" fill="#555b60"/>
<rect x="924" y="717" width="3" height="1" fill="#555b60"/>
<rect x="933" y="717" width="9" height="1" fill="#555b60"/>
<rect x="948" y="717" width="3" height="1" fill="#555b60"/>
<rect x="957" y="717" width="9" height="1" fill="#555b60"/>
<rect x="972" y="717" width="3" height="1" fill="#555b60"/>
<rect x="981" y="717" width="9" height="1" fill="#555b60"/>
<rect x="996" y="717" width="3" height="1" fill="#555b60"/>
<rect x="1005" y="717" width="9" height="1" fill="#555b60"/>
<rect x="1020" y="717" width="3" height="1" fill="#555b60"/>
<rect x="1029" y="717" width="9" height="1" fill="#555b60"/>
<rect x="1044" y="717" width="3" height="1" fill="#555b60"/>
<rect x="1053" y="717" width="9" height="1" fill="#555b60"/>
<rect x="1068" y="717" width="3" height="1" fill="#555b60"/>
<rect x="1077" y="717" width="9" height="1" fill="#555b60"/>
<rect x="1092" y="717" width="3" height="1" fill="#555b60"/>
<rect x="1101" y="717" width="9" height="1" fill="#555b60"/>
<rect x="1116" y="717" width="3" height="1" fill="#555b60"/>
<rect x="1125" y="717" width="9" height="1" fill="#555b60"/>
<rect x="1140" y="717" width="3" height="1" fill="#555b60"/>
<rect x="1149" y="717" width="9" height="1" fill="#555b60"/>
<rect x="1164" y="717" width="3" height="1" fill="#555b60"/>
<rect x="1173" y="717" width="9" height="1" fill="#555b60"/>
<rect x="1188" y="717" width="3" height="1" fill="#555b60"/>
<rect x="1197" y="717" width="9" height="1" fill="#555b60"/>
<rect x="1212" y="717" width="3" height="1" fill="#555b60"/>
<rect x="1221" y="717" width="9" height="1" fill="#555b60"/>
<rect x="1236" y="717" width="3" height="1" fill="#555b60"/>
<rect x="1245" y="717" width="9" height="1" fill="#555b60"/>
<rect x="1260" y="717" width="3" height="1" fill="#555b60"/>
<rect x="1269" y="717" width="9" height="1" fill="#555b60"/>
<rect x="1284" y="717" width="3" height="1" fill="#555b60"/>
<rect x="1293" y="717" width="9" height="1" fill="#555b60"/>
<rect x="1308" y="717" width="3" height="1" fill="#555b60"/>
<rect x="1317" y="717" width="9" height="1" fill="#555b60"/>
<rect x="1332" y="717" width="3" height="1" fill="#555b60"/>
<rect x="1341" y="717" width="9" height="1" fill="#555b60"/>
<rect x="1356" y="717" width="3" height="1" fill="#555b60"/>
<rect x="1365" y="717" width="9" height="1" fill="#555b60"/>
<rect x="1380" y="717" width="3" height="1" fill="#555b60"/>
<rect x="1389" y="717" width="9" height="1" fill="#555b60"/>
<rect x="1404" y="717" width="3" height="1" fill="#555b60"/>
<rect x="1413" y="717" width="9" height="1" fill="#555b60"/>
<rect x="1428" y="717" width="3" height="1" fill="#555b60"/>
<rect x="1437" y="717" width="9" height="1" fill="#555b60"/>
<rect x="1452" y="717" width="3" height="1" fill="#555b60"/>
<rect x="1461" y="717" width="9" height="1" fill="#555b60"/>
<rect x="1476" y="717" width="3" height="1" fill="#555b60"/>
<rect x="1485" y="717" width="9" height="1" fill="#555b60"/>
<rect x="1500" y="717" width="3" height="1" fill="#555b60"/>
<rect x="1509" y="717" width="9" height="1" fill="#555b60"/>
<rect x="1524" y="717" width="3" height="1" fill="#555b60"/>
<rect x="1533" y="717" width="9" height="1" fill="#555b60"/>
<rect x="1548" y="717" width="3" height="1" fill="#555b60"/>
<rect x="1557" y="717" width="9" height="1" fill="#555b60"/>
<rect x="1572" y="717" width="3" height="1" fill="#555b60"/>
<rect x="1581" y="717" width="9" height="1" fill="#555b60"/>
<rect x="1596" y="717" width="3" height="1" fill="#555b60"/>
<rect x="1605" y="717" width="9" height="1" fill="#555b60"/>
<rect x="1620" y="717" width="3" height="1" fill="#555b60"/>
<rect x="1629" y="717" width="9" height="1" fill="#555b60"/>
<rect x="1644" y="717" width="3" height="1" fill="#555b60"/>
<rect x="1653" y="717" width="9" height="1" fill="#555b60"/>
<rect x="1668" y="717" width="3" height="1" fill="#555b60"/>
<rect x="1677" y="717" width="9" height="1" fill="#555b60"/>
<rect x="1692" y="717" width="3" height="1" fill="#555b60"/>
<rect x="1701" y="717" width="9" height="1" fill="#555b60"/>
<rect x="1716" y="717" width="3" height="1" fill="#555b60"/>
<rect x="1725" y="717" width="9" height="1" fill="#555b60"/>
<rect x="1740" y="717" width="3" height="1" fill="#555b60"/>
<rect x="1749" y="717" width="9" height="1" fill="#555b60"/>
<rect x="1764" y="717" width="3" height="1" fill="#555b60"/>
<rect x="1773" y="717" width="9" height="1" fill="#555b60"/>
<rect x="1788" y="717" width="3" height="1" fill="#555b60"/>
<rect x="1797" y="717" width="9" height="1" fill="#555b60"/>
<rect x="1812" y="717" width="3" height="1" fill="#555b60"/>
<rect x="1821" y="717" width="9" height="1" fill="#555b60"/>
<rect x="1836" y="717" width="3" height="1" fill="#555b60"/>
<rect x="1845" y="717" width="9" height="1" fill="#555b60"/>
<rect x="1860" y="717" width="3" height="1" fill="#555b60"/>
<rect x="1869" y="717" width="9" height="1" fill="#555b60"/>
<path d="M670,273h2v1h1v2h-1v1h-2v-1h-1v-2h1z" fill="#000"/><path d="M669,273h1v1h-1zM672,273h1v1h-1zM669,276h1v1h-1zM672,276h1v1h-1z" fill="#000" fill-opacity="0.3"/>
<path d="M694,345h2v1h1v2h-1v1h-2v-1h-1v-2h1z" fill="#000"/><path d="M693,345h1v1h-1zM696,345h1v1h-1zM693,348h1v1h-1zM696,348h1v1h-1z" fill="#000" fill-opacity="0.3"/>
<rect x="671" y="275" width="1" height="169" fill="#000"/>
<rect x="671" y="443" width="73" height="1" fill="#000"/>
<polygon points="743,438 743,449 755,443.5" fill="#000"/>
<rect x="695" y="347" width="1" height="73" fill="#000"/>
<rect x="695" y="419" width="49" height="1" fill="#000"/>
<polygon points="743,414 743,425 755,419.5" fill="#000"/>
<text x="761" y="429" font-size="12" letter-spacing="0.03">Grupo</text>
<text x="761" y="441" font-size="12" letter-spacing="0.03">electrógeno -</text>
<text x="761" y="453" font-size="12" letter-spacing="0.03">Circuitos</text>
<text x="761" y="465" font-size="12" letter-spacing="0.03">prioritarios</text>
<path d="M928,273h2v1h1v2h-1v1h-2v-1h-1v-2h1z" fill="#000"/><path d="M927,273h1v1h-1zM930,273h1v1h-1zM927,276h1v1h-1zM930,276h1v1h-1z" fill="#000" fill-opacity="0.3"/>
<rect x="929" y="275" width="1" height="157" fill="#000"/>
<path d="M952,297h2v1h1v2h-1v1h-2v-1h-1v-2h1z" fill="#000"/><path d="M951,297h1v1h-1zM954,297h1v1h-1zM951,300h1v1h-1zM954,300h1v1h-1z" fill="#000" fill-opacity="0.3"/>
<rect x="953" y="299" width="1" height="133" fill="#000"/>
<path d="M976,321h2v1h1v2h-1v1h-2v-1h-1v-2h1z" fill="#000"/><path d="M975,321h1v1h-1zM978,321h1v1h-1zM975,324h1v1h-1zM978,324h1v1h-1z" fill="#000" fill-opacity="0.3"/>
<rect x="977" y="323" width="1" height="109" fill="#000"/>
<path d="M1000,345h2v1h1v2h-1v1h-2v-1h-1v-2h1z" fill="#000"/><path d="M999,345h1v1h-1zM1002,345h1v1h-1zM999,348h1v1h-1zM1002,348h1v1h-1z" fill="#000" fill-opacity="0.3"/>
<rect x="1001" y="347" width="1" height="85" fill="#000"/>
<path d="M926.5,428.5L932.5,434.5M932.5,428.5L926.5,434.5" stroke="#000" stroke-width="1"/>
<line x1="921.5" y1="431.5" x2="929.5" y2="452.5" stroke="#000" stroke-width="1"/>
<rect x="929" y="452" width="1" height="14" fill="#000"/>
<path d="M950.5,428.5L956.5,434.5M956.5,428.5L950.5,434.5" stroke="#000" stroke-width="1"/>
<line x1="945.5" y1="431.5" x2="953.5" y2="452.5" stroke="#000" stroke-width="1"/>
<rect x="953" y="452" width="1" height="14" fill="#000"/>
<path d="M974.5,428.5L980.5,434.5M980.5,428.5L974.5,434.5" stroke="#000" stroke-width="1"/>
<line x1="969.5" y1="431.5" x2="977.5" y2="452.5" stroke="#000" stroke-width="1"/>
<rect x="977" y="452" width="1" height="14" fill="#000"/>
<rect x="917" y="465" width="73" height="1" fill="#000"/>
<rect x="917" y="489" width="73" height="1" fill="#000"/>
<rect x="917" y="477" width="73" height="1" fill="#000"/>
<rect x="917" y="465" width="1" height="25" fill="#000"/>
<rect x="989" y="465" width="1" height="25" fill="#000"/>
<rect x="941" y="465" width="1" height="25" fill="#000"/>
<rect x="965" y="465" width="1" height="25" fill="#000"/>
<rect x="929" y="465" width="1" height="5" fill="#000"/>
<rect x="929" y="469" width="5" height="1" fill="#000"/>
<rect x="933" y="469" width="1" height="5" fill="#000"/>
<rect x="929" y="473" width="5" height="1" fill="#000"/>
<rect x="929" y="473" width="1" height="5" fill="#000"/>
<rect x="928" y="480" width="1" height="7" fill="#000"/>
<path d="M931,481L934.5,483.5L931,486" fill="none" stroke="#000" stroke-width="1"/>
<rect x="953" y="465" width="1" height="5" fill="#000"/>
<rect x="953" y="469" width="5" height="1" fill="#000"/>
<rect x="957" y="469" width="1" height="5" fill="#000"/>
<rect x="953" y="473" width="5" height="1" fill="#000"/>
<rect x="953" y="473" width="1" height="5" fill="#000"/>
<rect x="952" y="480" width="1" height="7" fill="#000"/>
<path d="M955,481L958.5,483.5L955,486" fill="none" stroke="#000" stroke-width="1"/>
<rect x="977" y="465" width="1" height="5" fill="#000"/>
<rect x="977" y="469" width="5" height="1" fill="#000"/>
<rect x="981" y="469" width="1" height="5" fill="#000"/>
<rect x="977" y="473" width="5" height="1" fill="#000"/>
<rect x="977" y="473" width="1" height="5" fill="#000"/>
<rect x="976" y="480" width="1" height="7" fill="#000"/>
<path d="M979,481L982.5,483.5L979,486" fill="none" stroke="#000" stroke-width="1"/>
<rect x="893" y="437" width="1" height="11" fill="#000"/>
<rect x="893" y="442" width="8" height="1" fill="#000"/>
<rect x="900" y="435" width="15" height="1" fill="#000"/>
<rect x="900" y="449" width="15" height="1" fill="#000"/>
<rect x="900" y="435" width="1" height="15" fill="#000"/>
<rect x="914" y="435" width="1" height="15" fill="#000"/>
<rect x="907" y="435" width="1" height="15" fill="#000"/>
<rect x="900" y="442" width="15" height="1" fill="#000"/>
<rect x="907" y="452" width="1" height="3" fill="#555b60"/>
<rect x="907" y="458" width="1" height="3" fill="#555b60"/>
<rect x="907" y="464" width="1" height="3" fill="#555b60"/>
<rect x="907" y="470" width="1" height="3" fill="#555b60"/>
<rect x="907" y="476" width="1" height="3" fill="#555b60"/>
<rect x="907" y="482" width="1" height="2" fill="#555b60"/>
<rect x="907" y="471" width="3" height="1" fill="#555b60"/>
<rect x="913" y="471" width="3" height="1" fill="#555b60"/>
<rect x="907" y="483" width="3" height="1" fill="#555b60"/>
<rect x="913" y="483" width="3" height="1" fill="#555b60"/>
<rect x="917" y="442" width="3" height="1" fill="#555b60"/>
<rect x="923" y="442" width="3" height="1" fill="#555b60"/>
<rect x="929" y="442" width="3" height="1" fill="#555b60"/>
<rect x="935" y="442" width="3" height="1" fill="#555b60"/>
<rect x="941" y="442" width="3" height="1" fill="#555b60"/>
<rect x="947" y="442" width="3" height="1" fill="#555b60"/>
<rect x="953" y="442" width="3" height="1" fill="#555b60"/>
<rect x="959" y="442" width="3" height="1" fill="#555b60"/>
<rect x="965" y="442" width="3" height="1" fill="#555b60"/>
<rect x="971" y="442" width="3" height="1" fill="#555b60"/>
<rect x="977" y="442" width="3" height="1" fill="#555b60"/>
<rect x="983" y="442" width="3" height="1" fill="#555b60"/>
<rect x="989" y="442" width="3" height="1" fill="#555b60"/>
<rect x="995" y="442" width="3" height="1" fill="#555b60"/>
<rect x="996" y="431" width="11" height="1" fill="#000"/>
<rect x="1001" y="437" width="1" height="11" fill="#000"/>
<rect x="996" y="453" width="10" height="1" fill="#000"/>
<rect x="929" y="489" width="1" height="109" fill="#000"/>
<rect x="929" y="597" width="121" height="1" fill="#000"/>
<polygon points="1049,592 1049,603 1061,597.5" fill="#000"/>
<rect x="953" y="489" width="1" height="85" fill="#000"/>
<rect x="953" y="573" width="97" height="1" fill="#000"/>
<polygon points="1049,568 1049,579 1061,573.5" fill="#000"/>
<rect x="977" y="489" width="1" height="61" fill="#000"/>
<rect x="977" y="549" width="73" height="1" fill="#000"/>
<polygon points="1049,544 1049,555 1061,549.5" fill="#000"/>
<rect x="1001" y="453" width="1" height="73" fill="#000"/>
<rect x="1001" y="525" width="49" height="1" fill="#000"/>
<polygon points="1049,520 1049,531 1061,525.5" fill="#000"/>
<text x="1006" y="447" font-size="12" letter-spacing="0.15">Magnetotérmico</text>
<text x="1006" y="459" font-size="12" letter-spacing="0.03">3P+N</text>
<text x="1006" y="471" font-size="12" letter-spacing="0.03">In: 50.00 A</text>
<text x="1006" y="483" font-size="12" letter-spacing="0.03">Icu: 15.00 kA</text>
<text x="1067" y="535" font-size="12" letter-spacing="0.03">subcuadro</text>
<text x="1067" y="547" font-size="12" letter-spacing="0.03">multiuso</text>
<path d="M1221,321h2v1h1v2h-1v1h-2v-1h-1v-2h1z" fill="#000"/><path d="M1220,321h1v1h-1zM1223,321h1v1h-1zM1220,324h1v1h-1zM1223,324h1v1h-1z" fill="#000" fill-opacity="0.3"/>
<path d="M1245,345h2v1h1v2h-1v1h-2v-1h-1v-2h1z" fill="#000"/><path d="M1244,345h1v1h-1zM1247,345h1v1h-1zM1244,348h1v1h-1zM1247,348h1v1h-1z" fill="#000" fill-opacity="0.3"/>
<rect x="1222" y="323" width="1" height="109" fill="#000"/>
<rect x="1246" y="347" width="1" height="85" fill="#000"/>
<path d="M1219.5,428.5L1225.5,434.5M1225.5,428.5L1219.5,434.5" stroke="#000" stroke-width="1"/>
<line x1="1214.5" y1="431.5" x2="1222.5" y2="452.5" stroke="#000" stroke-width="1"/>
<rect x="1222" y="452" width="1" height="14" fill="#000"/>
<rect x="1210" y="465" width="25" height="1" fill="#000"/>
<rect x="1210" y="489" width="25" height="1" fill="#000"/>
<rect x="1210" y="477" width="25" height="1" fill="#000"/>
<rect x="1210" y="465" width="1" height="25" fill="#000"/>
<rect x="1234" y="465" width="1" height="25" fill="#000"/>
<rect x="1222" y="465" width="1" height="5" fill="#000"/>
<rect x="1222" y="469" width="5" height="1" fill="#000"/>
<rect x="1226" y="469" width="1" height="5" fill="#000"/>
<rect x="1222" y="473" width="5" height="1" fill="#000"/>
<rect x="1222" y="473" width="1" height="5" fill="#000"/>
<rect x="1221" y="480" width="1" height="7" fill="#000"/>
<path d="M1224,481L1227.5,483.5L1224,486" fill="none" stroke="#000" stroke-width="1"/>
<rect x="1186" y="437" width="1" height="11" fill="#000"/>
<rect x="1186" y="442" width="8" height="1" fill="#000"/>
<rect x="1193" y="435" width="15" height="1" fill="#000"/>
<rect x="1193" y="449" width="15" height="1" fill="#000"/>
<rect x="1193" y="435" width="1" height="15" fill="#000"/>
<rect x="1207" y="435" width="1" height="15" fill="#000"/>
<rect x="1200" y="435" width="1" height="15" fill="#000"/>
<rect x="1193" y="442" width="15" height="1" fill="#000"/>
<rect x="1200" y="452" width="1" height="3" fill="#555b60"/>
<rect x="1200" y="458" width="1" height="3" fill="#555b60"/>
<rect x="1200" y="464" width="1" height="3" fill="#555b60"/>
<rect x="1200" y="470" width="1" height="3" fill="#555b60"/>
<rect x="1200" y="476" width="1" height="3" fill="#555b60"/>
<rect x="1200" y="482" width="1" height="2" fill="#555b60"/>
<rect x="1200" y="471" width="3" height="1" fill="#555b60"/>
<rect x="1206" y="471" width="3" height="1" fill="#555b60"/>
<rect x="1200" y="483" width="3" height="1" fill="#555b60"/>
<rect x="1206" y="483" width="3" height="1" fill="#555b60"/>
<rect x="1210" y="442" width="3" height="1" fill="#555b60"/>
<rect x="1216" y="442" width="3" height="1" fill="#555b60"/>
<rect x="1222" y="442" width="3" height="1" fill="#555b60"/>
<rect x="1228" y="442" width="3" height="1" fill="#555b60"/>
<rect x="1234" y="442" width="3" height="1" fill="#555b60"/>
<rect x="1240" y="442" width="3" height="1" fill="#555b60"/>
<rect x="1241" y="431" width="11" height="1" fill="#000"/>
<rect x="1246" y="437" width="1" height="11" fill="#000"/>
<rect x="1241" y="453" width="10" height="1" fill="#000"/>
<rect x="1222" y="489" width="1" height="48" fill="#000"/>
<rect x="1246" y="453" width="1" height="84" fill="#000"/>
<text x="1250" y="447" font-size="12" letter-spacing="0.15">Magnetotérmico</text>
<text x="1250" y="459" font-size="12" letter-spacing="0.03">1P+N</text>
<text x="1250" y="471" font-size="12" letter-spacing="0.03">In: 10.00 A</text>
<text x="1250" y="483" font-size="12" letter-spacing="0.03">Icu: 10.00 kA</text>
<line x1="1214.5" y1="537.5" x2="1222.5" y2="558.5" stroke="#000" stroke-width="1"/>
<rect x="1222" y="558" width="1" height="40" fill="#000"/>
<line x1="1238.5" y1="537.5" x2="1246.5" y2="558.5" stroke="#000" stroke-width="1"/>
<rect x="1246" y="558" width="1" height="40" fill="#000"/>
<rect x="1206" y="548" width="3" height="1" fill="#555b60"/>
<rect x="1212" y="548" width="3" height="1" fill="#555b60"/>
<rect x="1218" y="548" width="3" height="1" fill="#555b60"/>
<rect x="1224" y="548" width="3" height="1" fill="#555b60"/>
<rect x="1230" y="548" width="3" height="1" fill="#555b60"/>
<rect x="1236" y="548" width="3" height="1" fill="#555b60"/>
<rect x="1242" y="548" width="1" height="1" fill="#555b60"/>
<rect x="1206" y="548" width="1" height="3" fill="#555b60"/>
<rect x="1206" y="554" width="1" height="3" fill="#555b60"/>
<rect x="1206" y="560" width="1" height="3" fill="#555b60"/>
<rect x="1206" y="566" width="1" height="3" fill="#555b60"/>
<rect x="1206" y="571" width="4" height="1" fill="#555b60"/>
<ellipse cx="1234.5" cy="571.5" rx="23.5" ry="5.5" fill="none" stroke="#000"/>
<rect x="1222" y="597" width="1" height="161" fill="#000"/>
<rect x="1246" y="597" width="1" height="161" fill="#000"/>
<text x="1258" y="544" font-size="12" letter-spacing="0.03">Diferencial</text>
<text x="1258" y="556" font-size="12" letter-spacing="0.03">2P</text>
<text x="1258" y="568" font-size="12" letter-spacing="0.03">In: 25.00 A</text>
<text x="1258" y="580" font-size="12" letter-spacing="0.03">IΔN: 30 mA</text>
<text x="1258" y="592" font-size="12" letter-spacing="0.03">Instantáneo</text>
<text x="1258" y="604" font-size="12" letter-spacing="0.03">Clase: AC</text>
<circle cx="1234.5" cy="772" r="18.5" fill="none" stroke="#000"/>
<path d="M1221.5,758.5L1247.5,785.5M1247.5,758.5L1221.5,785.5" stroke="#000"/>
<path d="M1197,715h2v1h1v2h-1v1h-2v-1h-1v-2h1z" fill="#000"/><path d="M1196,715h1v1h-1zM1199,715h1v1h-1zM1196,718h1v1h-1zM1199,718h1v1h-1z" fill="#000" fill-opacity="0.3"/>
<rect x="1198" y="717" width="1" height="9" fill="#555b60"/>
<rect x="1198" y="732" width="1" height="3" fill="#555b60"/>
<rect x="1198" y="740" width="1" height="9" fill="#555b60"/>
<rect x="1198" y="755" width="1" height="3" fill="#555b60"/>
<rect x="1198" y="764" width="1" height="9" fill="#555b60"/>
<rect x="1198" y="772" width="3" height="1" fill="#555b60"/>
<rect x="1207" y="772" width="9" height="1" fill="#555b60"/>
<path d="M1431,297h2v1h1v2h-1v1h-2v-1h-1v-2h1z" fill="#000"/><path d="M1430,297h1v1h-1zM1433,297h1v1h-1zM1430,300h1v1h-1zM1433,300h1v1h-1z" fill="#000" fill-opacity="0.3"/>
<path d="M1455,321h2v1h1v2h-1v1h-2v-1h-1v-2h1z" fill="#000"/><path d="M1454,321h1v1h-1zM1457,321h1v1h-1zM1454,324h1v1h-1zM1457,324h1v1h-1z" fill="#000" fill-opacity="0.3"/>
<rect x="1432" y="299" width="1" height="132" fill="#000"/>
<rect x="1456" y="323" width="1" height="108" fill="#000"/>
<line x1="1424.5" y1="431.5" x2="1432.5" y2="452.5" stroke="#000" stroke-width="1"/>
<rect x="1432" y="452" width="1" height="40" fill="#000"/>
<line x1="1448.5" y1="431.5" x2="1456.5" y2="452.5" stroke="#000" stroke-width="1"/>
<rect x="1456" y="452" width="1" height="40" fill="#000"/>
<rect x="1416" y="442" width="3" height="1" fill="#555b60"/>
<rect x="1422" y="442" width="3" height="1" fill="#555b60"/>
<rect x="1428" y="442" width="3" height="1" fill="#555b60"/>
<rect x="1434" y="442" width="3" height="1" fill="#555b60"/>
<rect x="1440" y="442" width="3" height="1" fill="#555b60"/>
<rect x="1446" y="442" width="3" height="1" fill="#555b60"/>
<rect x="1452" y="442" width="1" height="1" fill="#555b60"/>
<rect x="1416" y="442" width="1" height="3" fill="#555b60"/>
<rect x="1416" y="448" width="1" height="3" fill="#555b60"/>
<rect x="1416" y="454" width="1" height="3" fill="#555b60"/>
<rect x="1416" y="460" width="1" height="3" fill="#555b60"/>
<rect x="1416" y="465" width="4" height="1" fill="#555b60"/>
<ellipse cx="1444" cy="465.5" rx="23.5" ry="5.5" fill="none" stroke="#000"/>
<text x="1467" y="438" font-size="12" letter-spacing="0.03">Diferencial</text>
<text x="1467" y="450" font-size="12" letter-spacing="0.03">2P</text>
<text x="1467" y="462" font-size="12" letter-spacing="0.03">In: 63.00 A</text>
<text x="1467" y="474" font-size="12" letter-spacing="0.03">IΔN: 30 mA</text>
<text x="1467" y="486" font-size="12" letter-spacing="0.03">Instantáneo</text>
<text x="1467" y="498" font-size="12" letter-spacing="0.03">Clase: AC</text>
<rect x="1432" y="471" width="1" height="43" fill="#000"/>
<rect x="1456" y="471" width="1" height="43" fill="#000"/>
<rect x="1480" y="502" width="1" height="12" fill="#000"/>
<rect x="1480" y="502" width="18" height="1" fill="#000"/>
<rect x="1497" y="502" width="1" height="74" fill="#000"/>
<rect x="1456" y="575" width="42" height="1" fill="#000"/>
<path d="M1429.5,510.5L1435.5,516.5M1435.5,510.5L1429.5,516.5" stroke="#000" stroke-width="1"/>
<line x1="1424.5" y1="513.5" x2="1432.5" y2="534.5" stroke="#000" stroke-width="1"/>
<rect x="1432" y="534" width="1" height="14" fill="#000"/>
<path d="M1453.5,510.5L1459.5,516.5M1459.5,510.5L1453.5,516.5" stroke="#000" stroke-width="1"/>
<line x1="1448.5" y1="513.5" x2="1456.5" y2="534.5" stroke="#000" stroke-width="1"/>
<rect x="1456" y="534" width="1" height="14" fill="#000"/>
<path d="M1477.5,510.5L1483.5,516.5M1483.5,510.5L1477.5,516.5" stroke="#000" stroke-width="1"/>
<line x1="1472.5" y1="513.5" x2="1480.5" y2="534.5" stroke="#000" stroke-width="1"/>
<rect x="1480" y="534" width="1" height="14" fill="#000"/>
<rect x="1420" y="547" width="73" height="1" fill="#000"/>
<rect x="1420" y="571" width="73" height="1" fill="#000"/>
<rect x="1420" y="559" width="73" height="1" fill="#000"/>
<rect x="1420" y="547" width="1" height="25" fill="#000"/>
<rect x="1492" y="547" width="1" height="25" fill="#000"/>
<rect x="1444" y="547" width="1" height="25" fill="#000"/>
<rect x="1468" y="547" width="1" height="25" fill="#000"/>
<rect x="1432" y="547" width="1" height="5" fill="#000"/>
<rect x="1432" y="551" width="5" height="1" fill="#000"/>
<rect x="1436" y="551" width="1" height="5" fill="#000"/>
<rect x="1432" y="555" width="5" height="1" fill="#000"/>
<rect x="1432" y="555" width="1" height="5" fill="#000"/>
<rect x="1431" y="562" width="1" height="7" fill="#000"/>
<path d="M1434,563L1437.5,565.5L1434,568" fill="none" stroke="#000" stroke-width="1"/>
<rect x="1456" y="547" width="1" height="5" fill="#000"/>
<rect x="1456" y="551" width="5" height="1" fill="#000"/>
<rect x="1460" y="551" width="1" height="5" fill="#000"/>
<rect x="1456" y="555" width="5" height="1" fill="#000"/>
<rect x="1456" y="555" width="1" height="5" fill="#000"/>
<rect x="1455" y="562" width="1" height="7" fill="#000"/>
<path d="M1458,563L1461.5,565.5L1458,568" fill="none" stroke="#000" stroke-width="1"/>
<rect x="1480" y="547" width="1" height="5" fill="#000"/>
<rect x="1480" y="551" width="5" height="1" fill="#000"/>
<rect x="1484" y="551" width="1" height="5" fill="#000"/>
<rect x="1480" y="555" width="5" height="1" fill="#000"/>
<rect x="1480" y="555" width="1" height="5" fill="#000"/>
<rect x="1479" y="562" width="1" height="7" fill="#000"/>
<path d="M1482,563L1485.5,565.5L1482,568" fill="none" stroke="#000" stroke-width="1"/>
<rect x="1396" y="519" width="1" height="11" fill="#000"/>
<rect x="1396" y="524" width="8" height="1" fill="#000"/>
<rect x="1403" y="517" width="15" height="1" fill="#000"/>
<rect x="1403" y="531" width="15" height="1" fill="#000"/>
<rect x="1403" y="517" width="1" height="15" fill="#000"/>
<rect x="1417" y="517" width="1" height="15" fill="#000"/>
<rect x="1410" y="517" width="1" height="15" fill="#000"/>
<rect x="1403" y="524" width="15" height="1" fill="#000"/>
<rect x="1410" y="534" width="1" height="3" fill="#555b60"/>
<rect x="1410" y="540" width="1" height="3" fill="#555b60"/>
<rect x="1410" y="546" width="1" height="3" fill="#555b60"/>
<rect x="1410" y="552" width="1" height="3" fill="#555b60"/>
<rect x="1410" y="558" width="1" height="3" fill="#555b60"/>
<rect x="1410" y="564" width="1" height="2" fill="#555b60"/>
<rect x="1410" y="553" width="3" height="1" fill="#555b60"/>
<rect x="1416" y="553" width="3" height="1" fill="#555b60"/>
<rect x="1410" y="565" width="3" height="1" fill="#555b60"/>
<rect x="1416" y="565" width="3" height="1" fill="#555b60"/>
<rect x="1420" y="524" width="3" height="1" fill="#555b60"/>
<rect x="1426" y="524" width="3" height="1" fill="#555b60"/>
<rect x="1432" y="524" width="3" height="1" fill="#555b60"/>
<rect x="1438" y="524" width="3" height="1" fill="#555b60"/>
<rect x="1444" y="524" width="3" height="1" fill="#555b60"/>
<rect x="1450" y="524" width="3" height="1" fill="#555b60"/>
<rect x="1456" y="524" width="3" height="1" fill="#555b60"/>
<rect x="1462" y="524" width="3" height="1" fill="#555b60"/>
<rect x="1468" y="524" width="3" height="1" fill="#555b60"/>
<rect x="1474" y="524" width="3" height="1" fill="#555b60"/>
<rect x="1480" y="571" width="1" height="9" fill="#000"/>
<rect x="1456" y="579" width="25" height="1" fill="#000"/>
<rect x="1432" y="571" width="1" height="186" fill="#000"/>
<rect x="1456" y="571" width="1" height="186" fill="#000"/>
<text x="1497" y="530" font-size="12" letter-spacing="0.15">Magnetotérmico</text>
<text x="1497" y="542" font-size="12" letter-spacing="0.03">2P</text>
<text x="1497" y="554" font-size="12" letter-spacing="0.03">In: 63.00 A</text>
<text x="1497" y="566" font-size="12" letter-spacing="0.03">Icu: 10.00 kA</text>
<circle cx="1444.5" cy="772" r="18.5" fill="none" stroke="#000"/>
<path d="M1432.5,756L1435.5,767M1456.5,756L1452,767" stroke="#000"/>
<circle cx="1435.5" cy="767" r="2.8" fill="#000"/><circle cx="1452.5" cy="767" r="2.8" fill="#000"/><circle cx="1444.5" cy="782.5" r="3.5" fill="#000"/>
<path d="M1407,715h2v1h1v2h-1v1h-2v-1h-1v-2h1z" fill="#000"/><path d="M1406,715h1v1h-1zM1409,715h1v1h-1zM1406,718h1v1h-1zM1409,718h1v1h-1z" fill="#000" fill-opacity="0.3"/>
<rect x="1408" y="717" width="1" height="9" fill="#555b60"/>
<rect x="1408" y="732" width="1" height="3" fill="#555b60"/>
<rect x="1408" y="742" width="1" height="9" fill="#555b60"/>
<rect x="1408" y="757" width="1" height="3" fill="#555b60"/>
<rect x="1408" y="766" width="1" height="9" fill="#555b60"/>
<rect x="1408" y="781" width="1" height="2" fill="#555b60"/>
<rect x="1412" y="782" width="9" height="1" fill="#555b60"/>
<rect x="1436" y="782" width="6" height="1" fill="#555b60"/>
<text x="1398" y="795" font-size="12" letter-spacing="0.03">sistema</text>
<text x="1398" y="807" font-size="12" letter-spacing="0.03">contraincendios</text>
<path d="M1678,273h2v1h1v2h-1v1h-2v-1h-1v-2h1z" fill="#000"/><path d="M1677,273h1v1h-1zM1680,273h1v1h-1zM1677,276h1v1h-1zM1680,276h1v1h-1z" fill="#000" fill-opacity="0.3"/>
<rect x="1679" y="275" width="1" height="156" fill="#000"/>
<path d="M1701,297h2v1h1v2h-1v1h-2v-1h-1v-2h1z" fill="#000"/><path d="M1700,297h1v1h-1zM1703,297h1v1h-1zM1700,300h1v1h-1zM1703,300h1v1h-1z" fill="#000" fill-opacity="0.3"/>
<rect x="1702" y="299" width="1" height="132" fill="#000"/>
<path d="M1725,321h2v1h1v2h-1v1h-2v-1h-1v-2h1z" fill="#000"/><path d="M1724,321h1v1h-1zM1727,321h1v1h-1zM1724,324h1v1h-1zM1727,324h1v1h-1z" fill="#000" fill-opacity="0.3"/>
<rect x="1726" y="323" width="1" height="108" fill="#000"/>
<path d="M1749,345h2v1h1v2h-1v1h-2v-1h-1v-2h1z" fill="#000"/><path d="M1748,345h1v1h-1zM1751,345h1v1h-1zM1748,348h1v1h-1zM1751,348h1v1h-1z" fill="#000" fill-opacity="0.3"/>
<rect x="1750" y="347" width="1" height="84" fill="#000"/>
<line x1="1671.5" y1="431.5" x2="1679.5" y2="452.5" stroke="#000" stroke-width="1"/>
<rect x="1679" y="452" width="1" height="40" fill="#000"/>
<line x1="1694.5" y1="431.5" x2="1702.5" y2="452.5" stroke="#000" stroke-width="1"/>
<rect x="1702" y="452" width="1" height="40" fill="#000"/>
<line x1="1718.5" y1="431.5" x2="1726.5" y2="452.5" stroke="#000" stroke-width="1"/>
<rect x="1726" y="452" width="1" height="40" fill="#000"/>
<line x1="1742.5" y1="431.5" x2="1750.5" y2="452.5" stroke="#000" stroke-width="1"/>
<rect x="1750" y="452" width="1" height="40" fill="#000"/>
<rect x="1663" y="442" width="3" height="1" fill="#555b60"/>
<rect x="1669" y="442" width="3" height="1" fill="#555b60"/>
<rect x="1675" y="442" width="3" height="1" fill="#555b60"/>
<rect x="1681" y="442" width="3" height="1" fill="#555b60"/>
<rect x="1687" y="442" width="3" height="1" fill="#555b60"/>
<rect x="1693" y="442" width="3" height="1" fill="#555b60"/>
<rect x="1699" y="442" width="3" height="1" fill="#555b60"/>
<rect x="1705" y="442" width="3" height="1" fill="#555b60"/>
<rect x="1711" y="442" width="3" height="1" fill="#555b60"/>
<rect x="1717" y="442" width="3" height="1" fill="#555b60"/>
<rect x="1723" y="442" width="3" height="1" fill="#555b60"/>
<rect x="1729" y="442" width="3" height="1" fill="#555b60"/>
<rect x="1735" y="442" width="3" height="1" fill="#555b60"/>
<rect x="1741" y="442" width="3" height="1" fill="#555b60"/>
<rect x="1663" y="442" width="1" height="3" fill="#555b60"/>
<rect x="1663" y="448" width="1" height="3" fill="#555b60"/>
<rect x="1663" y="454" width="1" height="3" fill="#555b60"/>
<rect x="1663" y="460" width="1" height="3" fill="#555b60"/>
<rect x="1663" y="465" width="4" height="1" fill="#555b60"/>
<ellipse cx="1714" cy="465.5" rx="47.5" ry="5.5" fill="none" stroke="#000"/>
<text x="1762" y="438" font-size="12" letter-spacing="0.03">Diferencial</text>
<text x="1762" y="450" font-size="12" letter-spacing="0.03">4P</text>
<text x="1762" y="462" font-size="12" letter-spacing="0.03">In: 40.00 A</text>
<text x="1762" y="474" font-size="12" letter-spacing="0.03">IΔN: 30 mA</text>
<text x="1762" y="486" font-size="12" letter-spacing="0.03">Instantáneo</text>
<text x="1762" y="498" font-size="12" letter-spacing="0.03">Clase: AC</text>
<rect x="1679" y="471" width="1" height="43" fill="#000"/>
<rect x="1702" y="471" width="1" height="43" fill="#000"/>
<rect x="1726" y="471" width="1" height="43" fill="#000"/>
<rect x="1750" y="471" width="1" height="43" fill="#000"/>
<path d="M1676.5,510.5L1682.5,516.5M1682.5,510.5L1676.5,516.5" stroke="#000" stroke-width="1"/>
<line x1="1671.5" y1="513.5" x2="1679.5" y2="534.5" stroke="#000" stroke-width="1"/>
<rect x="1679" y="534" width="1" height="14" fill="#000"/>
<path d="M1699.5,510.5L1705.5,516.5M1705.5,510.5L1699.5,516.5" stroke="#000" stroke-width="1"/>
<line x1="1694.5" y1="513.5" x2="1702.5" y2="534.5" stroke="#000" stroke-width="1"/>
<rect x="1702" y="534" width="1" height="14" fill="#000"/>
<path d="M1723.5,510.5L1729.5,516.5M1729.5,510.5L1723.5,516.5" stroke="#000" stroke-width="1"/>
<line x1="1718.5" y1="513.5" x2="1726.5" y2="534.5" stroke="#000" stroke-width="1"/>
<rect x="1726" y="534" width="1" height="14" fill="#000"/>
<rect x="1667" y="547" width="72" height="1" fill="#000"/>
<rect x="1667" y="571" width="72" height="1" fill="#000"/>
<rect x="1667" y="559" width="72" height="1" fill="#000"/>
<rect x="1667" y="547" width="1" height="25" fill="#000"/>
<rect x="1738" y="547" width="1" height="25" fill="#000"/>
<rect x="1690" y="547" width="1" height="25" fill="#000"/>
<rect x="1714" y="547" width="1" height="25" fill="#000"/>
<rect x="1679" y="547" width="1" height="5" fill="#000"/>
<rect x="1679" y="551" width="5" height="1" fill="#000"/>
<rect x="1683" y="551" width="1" height="5" fill="#000"/>
<rect x="1679" y="555" width="5" height="1" fill="#000"/>
<rect x="1679" y="555" width="1" height="5" fill="#000"/>
<rect x="1678" y="562" width="1" height="7" fill="#000"/>
<path d="M1681,563L1684.5,565.5L1681,568" fill="none" stroke="#000" stroke-width="1"/>
<rect x="1702" y="547" width="1" height="5" fill="#000"/>
<rect x="1702" y="551" width="5" height="1" fill="#000"/>
<rect x="1706" y="551" width="1" height="5" fill="#000"/>
<rect x="1702" y="555" width="5" height="1" fill="#000"/>
<rect x="1702" y="555" width="1" height="5" fill="#000"/>
<rect x="1701" y="562" width="1" height="7" fill="#000"/>
<path d="M1704,563L1707.5,565.5L1704,568" fill="none" stroke="#000" stroke-width="1"/>
<rect x="1726" y="547" width="1" height="5" fill="#000"/>
<rect x="1726" y="551" width="5" height="1" fill="#000"/>
<rect x="1730" y="551" width="1" height="5" fill="#000"/>
<rect x="1726" y="555" width="5" height="1" fill="#000"/>
<rect x="1726" y="555" width="1" height="5" fill="#000"/>
<rect x="1725" y="562" width="1" height="7" fill="#000"/>
<path d="M1728,563L1731.5,565.5L1728,568" fill="none" stroke="#000" stroke-width="1"/>
<rect x="1643" y="519" width="1" height="11" fill="#000"/>
<rect x="1643" y="524" width="8" height="1" fill="#000"/>
<rect x="1650" y="517" width="15" height="1" fill="#000"/>
<rect x="1650" y="531" width="15" height="1" fill="#000"/>
<rect x="1650" y="517" width="1" height="15" fill="#000"/>
<rect x="1664" y="517" width="1" height="15" fill="#000"/>
<rect x="1657" y="517" width="1" height="15" fill="#000"/>
<rect x="1650" y="524" width="15" height="1" fill="#000"/>
<rect x="1657" y="534" width="1" height="3" fill="#555b60"/>
<rect x="1657" y="540" width="1" height="3" fill="#555b60"/>
<rect x="1657" y="546" width="1" height="3" fill="#555b60"/>
<rect x="1657" y="552" width="1" height="3" fill="#555b60"/>
<rect x="1657" y="558" width="1" height="3" fill="#555b60"/>
<rect x="1657" y="564" width="1" height="2" fill="#555b60"/>
<rect x="1657" y="553" width="3" height="1" fill="#555b60"/>
<rect x="1663" y="553" width="3" height="1" fill="#555b60"/>
<rect x="1657" y="565" width="3" height="1" fill="#555b60"/>
<rect x="1663" y="565" width="3" height="1" fill="#555b60"/>
<rect x="1667" y="524" width="3" height="1" fill="#555b60"/>
<rect x="1673" y="524" width="3" height="1" fill="#555b60"/>
<rect x="1679" y="524" width="3" height="1" fill="#555b60"/>
<rect x="1685" y="524" width="3" height="1" fill="#555b60"/>
<rect x="1691" y="524" width="3" height="1" fill="#555b60"/>
<rect x="1697" y="524" width="3" height="1" fill="#555b60"/>
<rect x="1703" y="524" width="3" height="1" fill="#555b60"/>
<rect x="1709" y="524" width="3" height="1" fill="#555b60"/>
<rect x="1715" y="524" width="3" height="1" fill="#555b60"/>
<rect x="1721" y="524" width="3" height="1" fill="#555b60"/>
<rect x="1727" y="524" width="3" height="1" fill="#555b60"/>
<rect x="1733" y="524" width="3" height="1" fill="#555b60"/>
<rect x="1739" y="524" width="3" height="1" fill="#555b60"/>
<rect x="1745" y="524" width="3" height="1" fill="#555b60"/>
<rect x="1745" y="513" width="11" height="1" fill="#000"/>
<rect x="1750" y="519" width="1" height="11" fill="#000"/>
<rect x="1745" y="535" width="10" height="1" fill="#000"/>
<text x="1755" y="530" font-size="12" letter-spacing="0.15">Magnetotérmico</text>
<text x="1755" y="542" font-size="12" letter-spacing="0.03">3P+N</text>
<text x="1755" y="554" font-size="12" letter-spacing="0.03">In: 32.00 A</text>
<text x="1755" y="566" font-size="12" letter-spacing="0.03">Icu: 15.00 kA</text>
<rect x="1679" y="571" width="1" height="219" fill="#000"/>
<rect x="1679" y="789" width="69" height="1" fill="#000"/>
<rect x="1747" y="782" width="1" height="8" fill="#000"/>
<rect x="1702" y="571" width="1" height="213" fill="#000"/>
<rect x="1702" y="783" width="5" height="1" fill="#000"/>
<rect x="1726" y="571" width="1" height="187" fill="#000"/>
<rect x="1726" y="760" width="1" height="12" fill="#000"/>
<rect x="1723" y="757" width="7" height="1" fill="#000"/>
<rect x="1723" y="760" width="7" height="1" fill="#000"/>
<rect x="1726" y="758" width="1" height="2" fill="#fff"/>
<rect x="1750" y="535" width="1" height="237" fill="#000"/>
<rect x="1726" y="771" width="25" height="1" fill="#000"/>
<path d="M1706.5,783.5L1726.5,771.5L1747.5,783" fill="none" stroke="#000"/>
<text x="1673" y="805" font-size="12" letter-spacing="0.03">Batería de</text>
<text x="1673" y="817" font-size="12" letter-spacing="0.03">condesadores</text>
<line x1="1713.33" y1="775.32" x2="1716.93" y2="781.32" stroke="#000"/>
<line x1="1716.07" y1="773.68" x2="1719.67" y2="779.68" stroke="#000"/>
<line x1="1737.28" y1="773.46" x2="1733.92" y2="779.60" stroke="#000"/>
<line x1="1740.08" y1="775.00" x2="1736.72" y2="781.14" stroke="#000"/>
</svg>
</body></html>
